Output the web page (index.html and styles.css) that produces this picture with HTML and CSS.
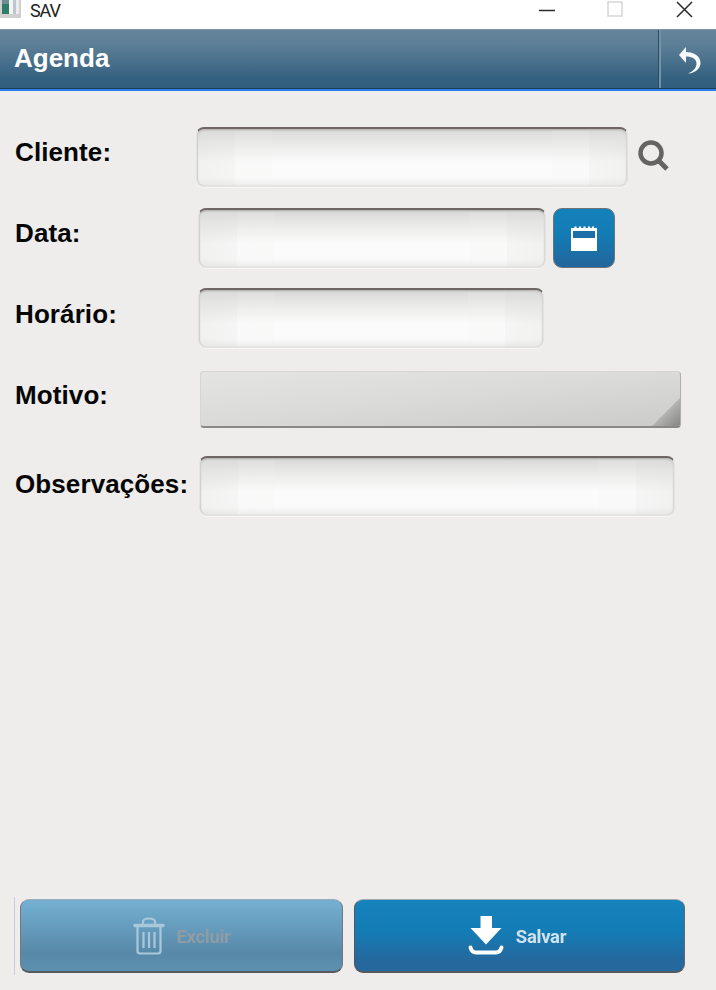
FILE: index.html
```html
<!DOCTYPE html>
<html lang="pt">
<head>
<meta charset="utf-8">
<title>SAV</title>
<link rel="stylesheet" href="styles.css">
</head>
<body>
<div class="window">
  <div class="titlebar">
    <svg class="app-icon" width="22" height="19" viewBox="0 0 22 19">
      <rect x="0" y="0" width="21" height="18" fill="#cfd0cf"/>
      <rect x="2" y="0" width="7" height="14" fill="#2f7d68"/>
      <rect x="2" y="0" width="7" height="4" fill="#6d8f92"/>
      <rect x="9" y="0" width="4" height="14" fill="#f4f4f4"/>
      <rect x="13" y="0" width="3" height="14" fill="#bcc6cb"/>
      <rect x="16" y="0" width="3" height="14" fill="#ececec"/>
    </svg>
    <span class="app-name">SAV</span>
    <div class="controls">
      <svg class="ctl ctl-min" width="16" height="16" viewBox="0 0 16 16"><path d="M0 9.5H16" stroke="#2b2b2b" stroke-width="1.5"/></svg>
      <svg class="ctl ctl-max" width="16" height="16" viewBox="0 0 16 16"><rect x="1" y="1" width="14" height="14" fill="none" stroke="#d6d6d6" stroke-width="1.5"/></svg>
      <svg class="ctl ctl-close" width="17" height="17" viewBox="0 0 17 17"><path d="M1 1L16 16M16 1L1 16" stroke="#2b2b2b" stroke-width="1.5"/></svg>
    </div>
  </div>

  <header class="appbar">
    <h1 class="appbar-title">Agenda</h1>
    <div class="appbar-action">
      <svg class="soft" width="28" height="30" viewBox="0 0 28 30">
        <path d="M6 11L13 3V8C21 8 27.500 12 27.500 19C27.500 25 22 29 15 29.500C19 28 23.500 24.500 23.500 19.500C23.500 15 19 12.500 13 12.500V19Z" fill="#f6f8f9"/>
      </svg>
    </div>
  </header>
  <div class="accent"></div>

  <main class="form">
    <div class="row row-cliente">
      <label class="label">Cliente:</label>
      <div class="field field-cliente"></div>
      <svg class="search" width="32" height="32" viewBox="0 0 32 32">
        <circle cx="13" cy="13" r="10.500" fill="none" stroke="#666462" stroke-width="4.500"/>
        <path d="M20 20L29 29" stroke="#666462" stroke-width="5"/>
      </svg>
    </div>
    <div class="row row-data">
      <label class="label">Data:</label>
      <div class="field field-data"></div>
      <button class="cal-btn" type="button" aria-label="Calendário">
        <svg class="soft" width="28" height="27" viewBox="0 0 28 27">
          <path d="M1 3H27V26H1Z" fill="#fff"/>
          <rect x="3" y="6" width="22" height="7" fill="#1d6ea6"/>
          <path d="M5.500 1.500V5.500M10 1.500V5.500M14.500 1.500V5.500M19 1.500V5.500M23 1.500V5.500" stroke="#fff" stroke-width="2.200"/>
        </svg>
      </button>
    </div>
    <div class="row row-horario">
      <label class="label">Horário:</label>
      <div class="field field-horario"></div>
    </div>
    <div class="row row-motivo">
      <label class="label">Motivo:</label>
      <div class="select">
        <svg class="select-corner" width="28" height="28" viewBox="0 0 28 28">
          <defs><linearGradient id="corner" x1="0" y1="0" x2="1" y2="1"><stop offset="0.4" stop-color="#bdbdbb"/><stop offset="1" stop-color="#858583"/></linearGradient></defs>
          <path d="M28 0V28H0Z" fill="url(#corner)"/>
        </svg>
      </div>
    </div>
    <div class="row row-obs">
      <label class="label">Observações:</label>
      <div class="field field-obs"></div>
    </div>
  </main>

  <footer class="actions">
    <div class="rule"></div>
    <button class="btn btn-delete" type="button">
      <svg width="32" height="38" viewBox="0 0 32 38">
        <g fill="none" stroke="#a9c8da" stroke-width="2.200">
          <path d="M10 7V5C10 3 12 1.500 16 1.500S22 3 22 5V7"/>
          <path d="M2 8.500H30" stroke-width="3.500" stroke-linecap="round"/>
          <path d="M4.500 10V34C4.500 35.500 5.500 36.500 7 36.500H25C26.500 36.500 27.500 35.500 27.500 34V10"/>
          <path d="M10.500 15V31M16 15V31M21.500 15V31"/>
        </g>
      </svg>
      <span class="btn-text btn-text-off">Excluir</span>
    </button>
    <button class="btn btn-save" type="button">
      <svg width="36" height="39" viewBox="0 0 36 39">
        <path d="M12.500 0H24V12H33.500L18 28.500L2.500 12H12.500Z" fill="#fff"/>
        <path d="M2.500 31.500C3.500 35 5 36.500 8 36.500H28C31 36.500 32.500 35 33.500 31.500" fill="none" stroke="#fff" stroke-width="4" stroke-linecap="round"/>
      </svg>
      <span class="btn-text">Salvar</span>
    </button>
  </footer>
</div>
</body>
</html>
```
FILE: styles.css
```css
* { box-sizing: border-box; }
html, body { margin: 0; padding: 0; }
body { background: #eeedeb; font-family: "Liberation Sans", Arial, sans-serif; overflow: hidden; }
.window { width: 716px; height: 990px; display: flex; flex-direction: column; }
.soft { filter: blur(0.4px); }

.titlebar { height: 29px; background: #fff; display: flex; align-items: flex-start; flex: none; }
.app-icon { display: block; filter: blur(0.4px); }
.app-name { margin: 0 0 0 8px; font-family: "Roboto", sans-serif; font-size: 18px; color: #222; letter-spacing: -1.1px; }
.controls { margin-left: auto; display: flex; }
.ctl { display: block; margin-top: 1px; }
.ctl-min { margin-right: 52px; }
.ctl-max { margin-right: 53px; }
.ctl-close { margin-right: 23px; }

.appbar { height: 60px; flex: none; display: flex; align-items: stretch; justify-content: space-between;
  background: linear-gradient(#648499 0%, #5d7f97 25%, #33607f 85%, #325e7d 100%);
  border-top: 1px solid #7f96a9; border-bottom: 1px solid #1f3d52; }
.appbar-title { margin: 0; padding: 0 0 2px 14px; align-self: center; font-size: 26px; font-weight: 700; color: #fff; line-height: 30px; }
.appbar-action { width: 58px; border-left: 1px solid #2b4c63; box-shadow: inset 2px 0 0 #7491a8; display: flex; align-items: center; justify-content: center; padding-right: 2px; }
.accent { height: 2px; flex: none; background: #2c7fea; }

.form { padding: 36px 0 0 15px; flex: 1; display: flex; flex-direction: column; }
.row { display: flex; align-items: center; }
.label { width: 181px; flex: none; font-size: 26px; font-weight: 700; color: #060606; line-height: 30px; padding-bottom: 10px; letter-spacing: 0.1px; }
.row-horario .label { padding-bottom: 8px; }
.row-obs .label { padding-bottom: 4px; }

.field { height: 60px; border-radius: 8px; border: 1px solid #e4e3e1; border-top: 2px solid #6f6663;
  background:
    linear-gradient(90deg, rgba(222,222,220,.35) 0, rgba(222,222,220,.2) 38px, rgba(240,240,238,.15) 38px, rgba(240,240,238,.15) 75px, rgba(255,255,255,0) 75px, rgba(255,255,255,0) calc(100% - 75px), rgba(240,240,238,.15) calc(100% - 75px), rgba(240,240,238,.15) calc(100% - 38px), rgba(222,222,220,.2) calc(100% - 38px), rgba(222,222,220,.35) 100%),
    linear-gradient(#d8d8d6 0, #e9e9e8 25%, #fbfbfb 58%, #fbfbfb 85%, #ececec 100%);
  box-shadow: 0 1px 0 #f6f6f5, inset 1px 0 1px #d0d0ce, inset -1px 0 1px #d8d8d6, inset 0 1px 2px #a9a5a2;
  filter: blur(0.4px); }
.field-cliente { width: 432px; }
.field-data { width: 348px; margin-left: 2px; }
.field-horario { width: 346px; margin-left: 2px; }
.field-obs { width: 476px; margin-left: 3px; }

.row-data { margin-top: 21px; }
.row-horario { margin-top: 20px; }
.row-motivo { margin-top: 23px; }
.row-obs { margin-top: 28px; }

.search { margin: 0 0 2px 10px; display: block; filter: blur(0.4px); }

.cal-btn { width: 62px; height: 60px; margin-left: 7px; padding: 0; border: 1px solid #6f7272; border-radius: 9px; display: flex; align-items: center; justify-content: center;
  background: linear-gradient(#1481bb 0%, #137bb4 45%, #23669c 100%); }

.select { width: 481px; height: 57px; margin-left: 4px; overflow: hidden; display: flex; align-items: flex-end; justify-content: flex-end;
  border: 1px solid #d6d5d3; border-bottom: 2px solid #8b8886; border-right-color: #b0afad; border-radius: 4px;
  background: linear-gradient(174deg, #e4e4e2 0%, #dbdbd9 45%, #cbcbc9 100%);
  filter: blur(0.4px); }
.select-corner { display: block; }

.actions { flex: none; height: 78px; margin-bottom: 15px; display: flex; align-items: flex-start; padding-left: 14px; }
.rule { width: 1px; height: 78px; background: #c7cbdb; }
.btn { height: 74px; margin-top: 2px; padding: 0; border-radius: 9px; display: flex; align-items: center; justify-content: center; gap: 12px; font-family: "Roboto", sans-serif; filter: blur(0.4px); }
.btn-delete { width: 323px; margin-left: 5px; padding-left: 1px; gap: 11px; border: 1px solid #9cacb5; border-bottom: 2px solid #555a5e; border-left-color: #777; border-right-color: #777;
  background: linear-gradient(#75b0d2 0%, #6aa3c4 25%, #5888a8 75%, #5d90b0 100%); }
.btn-save { width: 331px; margin-left: 11px; padding-right: 5px; border: 1px solid #a5a8aa; border-bottom: 2px solid #555a5e; border-left-color: #555; border-right-color: #666;
  background: linear-gradient(#1583bd 0%, #147cb5 45%, #25689d 85%, #23699f 100%); }
.btn-text { margin-top: 2px; font-size: 18.5px; font-weight: 700; color: #cfe2ee; letter-spacing: -0.3px; line-height: 22px; }
.btn-text-off { color: #8f9ca5; }
```
